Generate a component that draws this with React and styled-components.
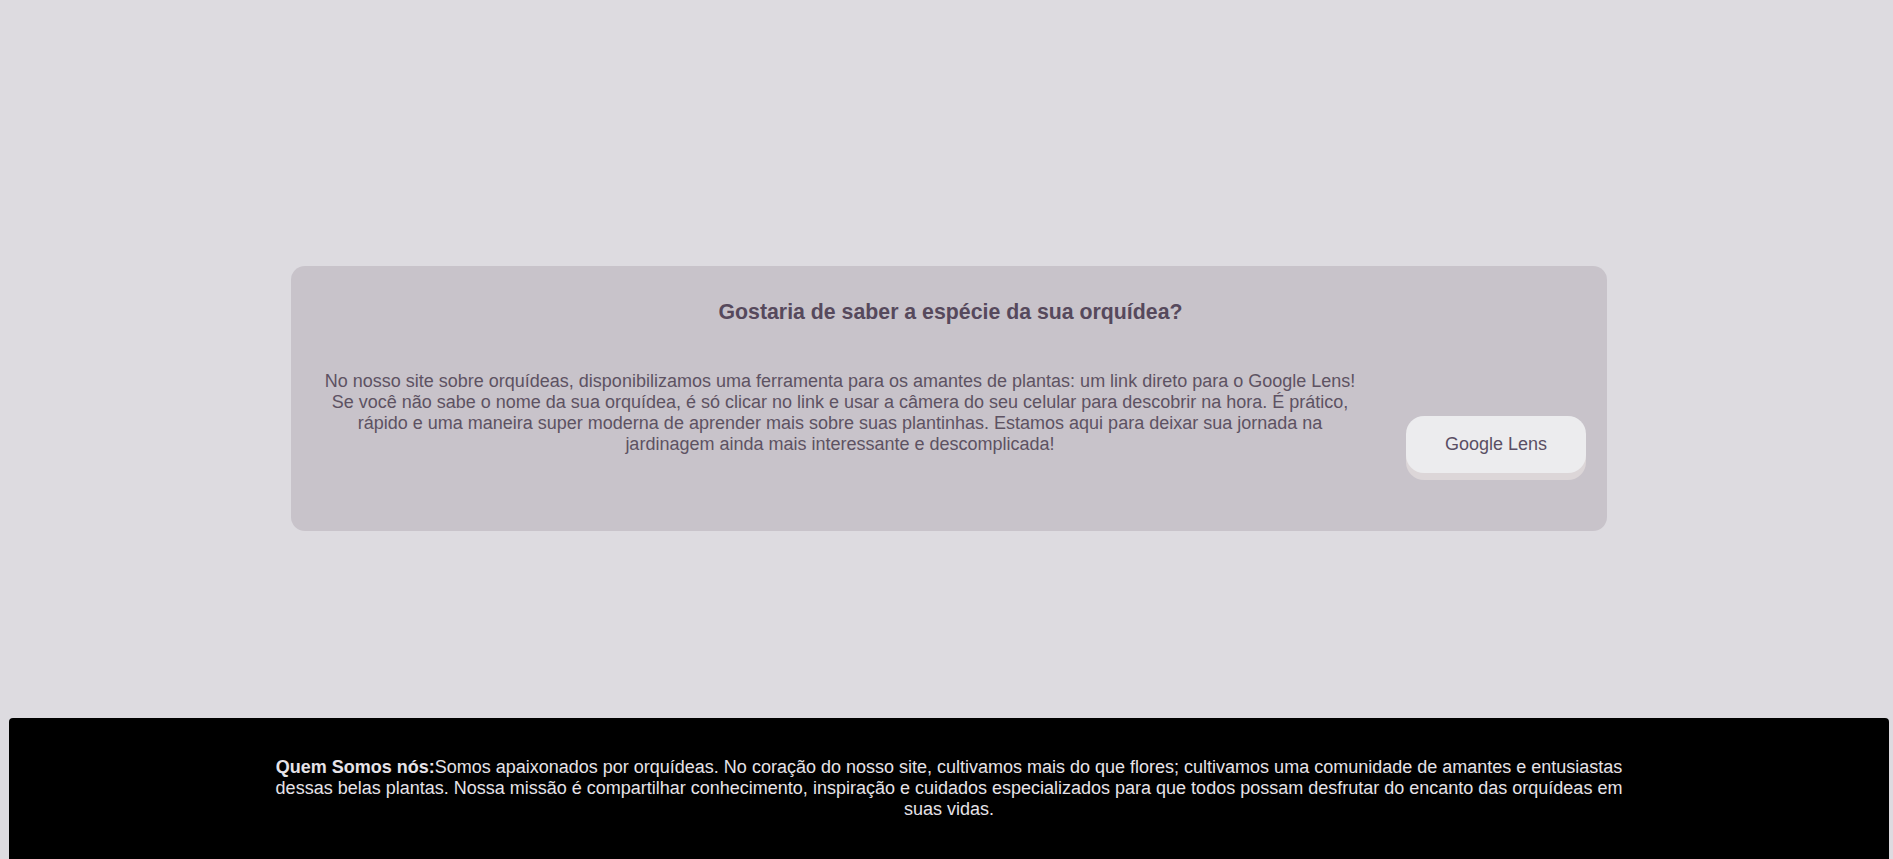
import React from 'react'
import styled, { createGlobalStyle } from 'styled-components'

const GlobalStyle = createGlobalStyle`
  body {
    margin: 8px 4px 0 9px;
    background: #dddbe0;
    font-family: "Liberation Sans", Arial, sans-serif;
  }
`

const App = () => (
  <>
    <GlobalStyle />
    <Main>
      <Card>
        <Title>Gostaria de saber a espécie da sua orquídea?</Title>
        <Row>
          <Text>
            No nosso site sobre orquídeas, disponibilizamos uma ferramenta para
            os amantes de plantas: um link direto para o Google Lens! Se você
            não sabe o nome da sua orquídea, é só clicar no link e usar a câmera
            do seu celular para descobrir na hora. É prático, rápido e uma
            maneira super moderna de aprender mais sobre suas plantinhas.
            Estamos aqui para deixar sua jornada na jardinagem ainda mais
            interessante e descomplicada!
          </Text>
          <LensButton href="#">Google Lens</LensButton>
        </Row>
      </Card>
    </Main>
    <Footer>
      <FooterText>
        <strong>Quem Somos nós:</strong>Somos apaixonados por orquídeas. No
        coração do nosso site, cultivamos mais do que flores; cultivamos uma
        comunidade de amantes e entusiastas dessas belas plantas. Nossa missão é
        compartilhar conhecimento, inspiração e cuidados especializados para que
        todos possam desfrutar do encanto das orquídeas em suas vidas.
      </FooterText>
    </Footer>
  </>
)

const Main = styled.main`
  padding: 258px 0 187px 0;
`

const Card = styled.section`
  width: 70%;
  margin: 0 auto;
  box-sizing: border-box;
  background: #c8c3ca;
  border-radius: 14px;
  padding: 34px 21px 58px 24px;
`

const Title = styled.h2`
  margin: 0;
  text-align: center;
  font-size: 21.3px;
  font-weight: bold;
  color: #56495c;
`

const Row = styled.div`
  display: flex;
  align-items: flex-end;
  margin-top: 46px;
`

const Text = styled.p`
  flex: 0 0 1050px;
  margin: 0 41px 18px 0;
  text-align: center;
  font-size: 18px;
  color: #5d5262;
`

const LensButton = styled.a`
  display: flex;
  align-items: center;
  justify-content: center;
  width: 180px;
  height: 57px;
  box-sizing: border-box;
  background: #ececee;
  border-radius: 18px;
  box-shadow: 0 7px 0 #dcd6d8;
  color: #5a4f64;
  font-size: 18px;
  text-decoration: none;
`

const Footer = styled.footer`
  background: #000;
  border-radius: 4px 4px 0 0;
  padding: 39px 0 40px 0;
`

const FooterText = styled.p`
  max-width: 1366px;
  margin: 0 auto;
  text-align: center;
  font-size: 18px;
  color: #e6e3e8;

  strong {
    font-weight: bold;
  }
`

export default App
